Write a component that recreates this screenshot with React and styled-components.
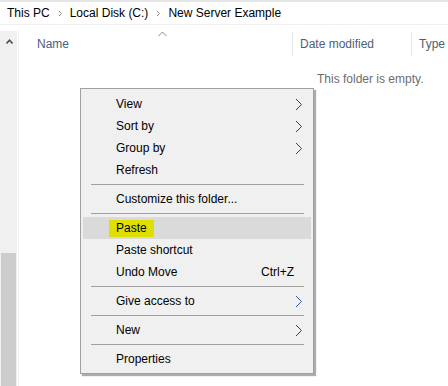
import React from "react";
import styled, { createGlobalStyle } from "styled-components";

const GlobalStyle = createGlobalStyle`
  html, body {
    margin: 0;
    padding: 0;
    background: #ffffff;
  }
  body {
    font-family: "Liberation Sans", Arial, sans-serif;
    font-size: 12px;
    color: #000;
  }
`;

export const Window = styled.div`
  position: relative;
  width: 448px;
  height: 386px;
  overflow: hidden;
  background: #fff;
  border-top: 2px solid #e6e6e6;
  box-sizing: border-box;
  display: flex;
  flex-direction: column;
`;

export const CrumbBar = styled.div`
  height: 22px;
  display: flex;
  align-items: center;
  padding-left: 7px;
  border-bottom: 1px solid #f0f0f0;
  white-space: nowrap;
`;

export const Crumb = styled.span`
  color: #000;
  line-height: 22px;
`;

export const CrumbSep = styled.span`
  display: flex;
  align-items: center;
  margin: 0 7px 0 8px;
  svg {
    display: block;
  }
`;

export const Body = styled.div`
  flex: 1;
  display: flex;
  margin-top: 6px;
  min-height: 0;
`;

export const ScrollBar = styled.div`
  width: 17px;
  flex-shrink: 0;
  background: #f0f0f0;
  display: flex;
  flex-direction: column;
  align-items: center;
  .arrow {
    margin-top: 8px;
    margin-left: 1px;
  }
`;

export const Thumb = styled.div`
  margin-top: auto;
  align-self: stretch;
  margin-left: 1px;
  margin-right: 1px;
  height: 133px;
  background: #cdcdcd;
`;

export const Pane = styled.div`
  flex: 1;
  margin-left: 1px;
  border-left: 1px solid #f2f2f2;
  display: flex;
  flex-direction: column;
  min-width: 0;
`;

export const HeaderRow = styled.div`
  height: 26px;
  display: flex;
  align-items: stretch;
  white-space: nowrap;
`;

export const HeaderCell = styled.div`
  position: relative;
  width: ${(p) => p.$width}px;
  flex-shrink: 0;
  padding-left: ${(p) => p.$pad}px;
  box-sizing: border-box;
  display: flex;
  align-items: center;
  color: #4c607a;
  &::after {
    content: "";
    display: ${(p) => (p.$divider ? "block" : "none")};
    position: absolute;
    right: 0;
    top: 1px;
    bottom: 1px;
    width: 1px;
    background: #e5e5e5;
  }
`;

export const SortCaret = styled.span`
  position: absolute;
  left: 139px;
  top: 0;
  svg {
    display: block;
  }
`;

export const EmptyNote = styled.div`
  margin-top: 14px;
  padding-left: 298px;
  color: #6d6d6d;
  white-space: nowrap;
  line-height: 16px;
`;

export const Menu = styled.div`
  position: absolute;
  left: 80px;
  top: 86px;
  width: 234px;
  box-sizing: border-box;
  background: #f0f0f0;
  border: 1px solid #a0a0a0;
  padding: 4px 2px 3px;
  box-shadow: 2px 2px 1px rgba(0, 0, 0, 0.32);
`;

export const MenuItem = styled.div`
  height: 22px;
  display: flex;
  align-items: center;
  padding-left: ${(p) => (p.$mark ? 26 : 33)}px;
  padding-right: 8px;
  background: ${(p) => (p.$active ? "#dadada" : "transparent")};
  white-space: nowrap;
`;

export const Label = styled.span`
  flex: 1;
  span {
    background: #e0e000;
    padding: 1px 7px 2px;
  }
`;

export const Shortcut = styled.span`
  margin-right: 9px;
`;

export const Separator = styled.div`
  height: 1px;
  margin: 3px 7px 3px 8px;
  background: #a0a0a0;
`;

const Chevron = ({ tone }) => (
  <svg width="8" height="13" viewBox="0 0 8 13">
    <polyline
      points="1,1 6.5,6.5 1,12"
      fill="none"
      stroke={tone === "blue" ? "#2f5b9a" : "#6a2f2a"}
      strokeWidth="1"
    />
  </svg>
);

const items = [
  { label: "View", sub: true },
  { label: "Sort by", sub: true },
  { label: "Group by", sub: true },
  { label: "Refresh" },
  { sep: true },
  { label: "Customize this folder..." },
  { sep: true },
  { label: "Paste", active: true, mark: true },
  { label: "Paste shortcut" },
  { label: "Undo Move", shortcut: "Ctrl+Z" },
  { sep: true },
  { label: "Give access to", sub: true, tone: "blue" },
  { sep: true },
  { label: "New", sub: true },
  { sep: true },
  { label: "Properties" },
];

const ContextMenu = () => (
  <Menu>
    {items.map((it, i) =>
      it.sep ? (
        <Separator key={i} />
      ) : (
        <MenuItem key={i} $active={it.active} $mark={it.mark}>
          <Label>{it.mark ? <span>{it.label}</span> : it.label}</Label>
          {it.shortcut && <Shortcut>{it.shortcut}</Shortcut>}
          {it.sub && <Chevron tone={it.tone} />}
        </MenuItem>
      )
    )}
  </Menu>
);

const SmallArrow = () => (
  <svg width="5" height="7" viewBox="0 0 5 7">
    <polyline points="1,1 3.5,3.5 1,6" fill="none" stroke="#8a8a8a" strokeWidth="1" />
  </svg>
);

export default function App() {
  return (
    <>
      <GlobalStyle />
      <Window>
        <CrumbBar>
          <Crumb>This PC</Crumb>
          <CrumbSep>
            <SmallArrow />
          </CrumbSep>
          <Crumb>Local Disk (C:)</Crumb>
          <CrumbSep>
            <SmallArrow />
          </CrumbSep>
          <Crumb>New Server Example</Crumb>
        </CrumbBar>
        <Body>
          <ScrollBar>
            <svg className="arrow" width="7" height="5" viewBox="0 0 7 5">
              <polyline points="0.5,4.5 3.5,1.2 6.5,4.5" fill="none" stroke="#505050" strokeWidth="1.6" />
            </svg>
            <Thumb />
          </ScrollBar>
          <Pane>
            <HeaderRow>
              <HeaderCell $width={274} $pad={18} $divider>
                Name
                <SortCaret>
                  <svg width="9" height="6" viewBox="0 0 9 6">
                    <polyline points="0.5,5 4.5,1 8.5,5" fill="none" stroke="#8a8a8a" strokeWidth="1" />
                  </svg>
                </SortCaret>
              </HeaderCell>
              <HeaderCell $width={119} $pad={7} $divider>
                Date modified
              </HeaderCell>
              <HeaderCell $width={60} $pad={7}>
                Type
              </HeaderCell>
            </HeaderRow>
            <EmptyNote>This folder is empty.</EmptyNote>
          </Pane>
        </Body>
        <ContextMenu />
      </Window>
    </>
  );
}
